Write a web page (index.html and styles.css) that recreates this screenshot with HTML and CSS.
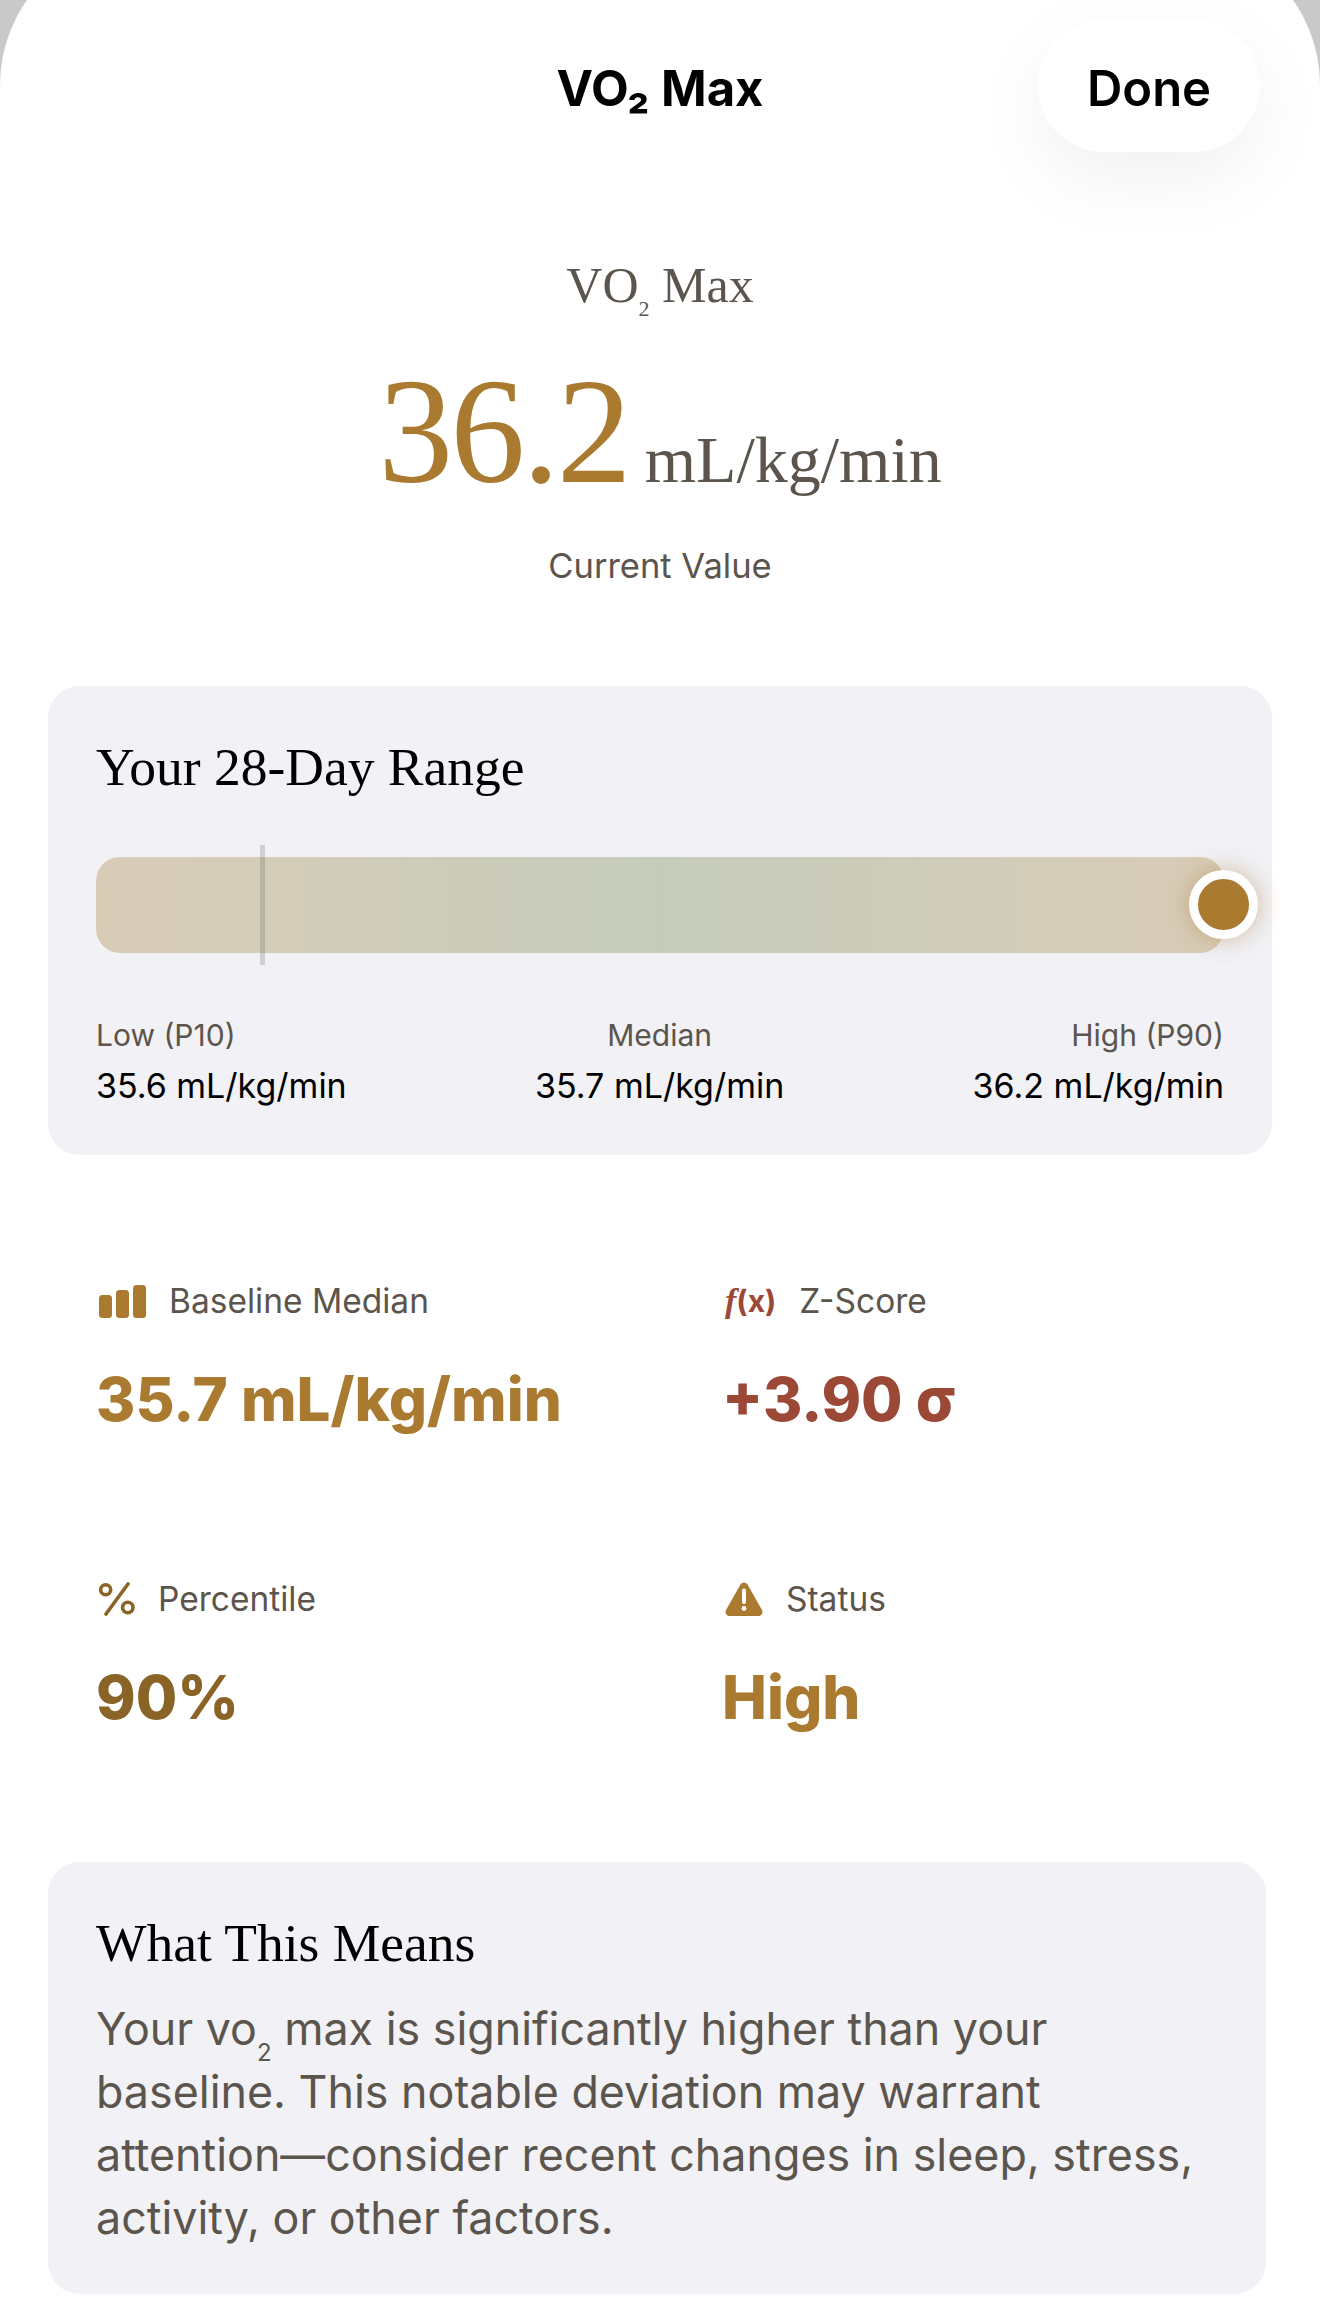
FILE: index.html
```html
<!DOCTYPE html>
<html lang="en">
<head>
    <meta charset="UTF-8">
    <meta name="viewport" content="width=device-width, initial-scale=1.0">
    <title>VO2 Max</title>
    <link rel="stylesheet" href="styles.css">
</head>
<body>
    <div class="sheet">
        <div class="nav-bar">
            <h1 class="nav-title">VO₂ Max</h1>
            <button class="done-btn">Done</button>
        </div>

        <div class="current">
            <div class="current-name">VO<sub>2</sub> Max</div>
            <div class="current-reading">
                <span class="current-value">36.2</span>
                <span class="current-unit">mL/kg/min</span>
            </div>
            <div class="current-label">Current Value</div>
        </div>

        <div class="card range-card">
            <h2 class="card-title">Your 28-Day Range</h2>
            <div class="range-track">
                <div class="range-tick"></div>
                <div class="range-dot"></div>
            </div>
            <div class="range-legend">
                <div class="legend-item">
                    <div class="legend-label">Low (P10)</div>
                    <div class="legend-value">35.6 mL/kg/min</div>
                </div>
                <div class="legend-item legend-center">
                    <div class="legend-label">Median</div>
                    <div class="legend-value">35.7 mL/kg/min</div>
                </div>
                <div class="legend-item legend-right">
                    <div class="legend-label">High (P90)</div>
                    <div class="legend-value">36.2 mL/kg/min</div>
                </div>
            </div>
        </div>

        <div class="stats">
            <div class="stat">
                <div class="stat-label">
                    <svg class="icon" width="47" height="33" viewBox="0 0 47 33">
                        <rect x="0" y="10" width="13" height="23" rx="3.5" fill="#a97a30"/>
                        <rect x="17" y="5" width="13" height="28" rx="3.5" fill="#a97a30"/>
                        <rect x="34" y="0" width="13" height="33" rx="3.5" fill="#a97a30"/>
                    </svg>
                    <span>Baseline Median</span>
                </div>
                <div class="stat-value gold">35.7 mL/kg/min</div>
            </div>
            <div class="stat">
                <div class="stat-label">
                    <span class="icon icon-fx"><i>f</i>(x)</span>
                    <span>Z-Score</span>
                </div>
                <div class="stat-value red">+3.90 σ</div>
            </div>
            <div class="stat">
                <div class="stat-label">
                    <svg class="icon" width="36" height="34" viewBox="0 0 36 34">
                        <g fill="none" stroke="#8a6327" stroke-width="3.600" stroke-linecap="round">
                            <circle cx="6.700" cy="7.700" r="5"/>
                            <circle cx="28.800" cy="25.500" r="5.200"/>
                            <path d="M29 2 L7 32"/>
                        </g>
                    </svg>
                    <span>Percentile</span>
                </div>
                <div class="stat-value brown">90%</div>
            </div>
            <div class="stat">
                <div class="stat-label">
                    <svg class="icon" width="38" height="34" viewBox="0 0 38 34">
                        <path d="M15.500 2.500 C17 -0.300 21 -0.300 22.500 2.500 L37 28 C38.500 31 36.500 34 33.500 34 L4.500 34 C1.500 34 -0.500 31 1 28 Z" fill="#a97a30"/>
                        <path d="M19 8.500 L19 20" stroke="#fff" stroke-width="4" stroke-linecap="round"/>
                        <circle cx="19" cy="26.500" r="2.400" fill="#fff"/>
                    </svg>
                    <span>Status</span>
                </div>
                <div class="stat-value gold">High</div>
            </div>
        </div>

        <div class="card means-card">
            <h2 class="card-title">What This Means</h2>
            <p class="means-text">Your vo<sub>2</sub> max is significantly higher than your baseline. This notable deviation may warrant attention—consider recent changes in sleep, stress, activity, or other factors.</p>
        </div>
    </div>
</body>
</html>
```

FILE: styles.css
```css
:root {
    --gold: #a97a30;
    --brown: #8a6327;
    --red: #9c4836;
    --text-muted: #5c554d;
    --surface: #f1f1f6;
}
html, body {
    margin: 0;
    padding: 0;
}
body {
    width: 1320px;
    height: 2313px;
    overflow: hidden;
    background: #c9c9c9;
    font-family: Inter, "Noto Sans", sans-serif;
    color: #000;
}
h1, h2, p {
    margin: 0;
    font-weight: normal;
}
/* The sheet's top edge runs above the screen, so only part of its corner shows */
.sheet {
    height: 2375px;
    box-sizing: border-box;
    margin-top: -62px;
    padding: 82px 48px 0;
    background: #fff;
    border-radius: 147px 147px 0 0;
    overflow: hidden;
}

/* Top bar */
.nav-bar {
    position: relative;
    display: flex;
    justify-content: flex-end;
    align-items: center;
    height: 132px;
    padding-right: 12px;
}
.nav-title {
    position: absolute;
    left: 0;
    right: 0;
    padding-top: 4px;
    text-align: center;
    font-size: 49px;
    font-weight: 700;
}
.done-btn {
    width: 222px;
    height: 132px;
    padding: 5px 0 0;
    border: none;
    border-radius: 66px;
    background: #fff;
    color: #000;
    font-family: inherit;
    font-size: 49px;
    font-weight: 600;
    box-shadow: 0 26px 80px rgba(0, 0, 0, 0.06);
}

/* Current value */
.current {
    display: flex;
    flex-direction: column;
    align-items: center;
    margin-top: 103px;
    color: var(--text-muted);
}
.current-name {
    font-family: "Liberation Serif", serif;
    font-size: 50px;
    line-height: 60px;
}
.current-name sub {
    font-size: 22px;
    line-height: 0;
    vertical-align: -14px;
}
.current-reading {
    display: flex;
    align-items: baseline;
    gap: 16px;
    margin-top: 41px;
    font-family: "Liberation Serif", serif;
}
.current-value {
    font-size: 150px;
    line-height: 150px;
    letter-spacing: -3px;
    color: var(--gold);
}
.current-unit {
    font-size: 66px;
}
.current-label {
    margin-top: 38px;
    font-size: 34.5px;
    line-height: 44px;
}

/* Cards */
.card {
    background: var(--surface);
    border-radius: 32px;
    box-sizing: border-box;
}
.card-title {
    font-family: "Liberation Serif", serif;
    font-size: 53.5px;
    line-height: 60px;
}
.range-card {
    width: 1224px;
    height: 469px;
    margin-top: 98px;
    padding: 51px 48px 0;
}
.range-track {
    position: relative;
    height: 96px;
    width: 1128px;
    margin-top: 60px;
    border-radius: 24px;
    background: linear-gradient(90deg, #d9ccb7 0%, #c6ccbc 50%, #d9ccb7 100%);
}
.range-tick {
    position: absolute;
    left: 164px;
    top: -12px;
    width: 5px;
    height: 120px;
    background: rgba(92, 85, 77, 0.22);
}
.range-dot {
    position: absolute;
    right: -34px;
    top: 13px;
    width: 51px;
    height: 51px;
    border: 9px solid #fff;
    border-radius: 50%;
    background: var(--gold);
    box-shadow: 0 0 24px rgba(169, 122, 48, 0.45);
}
.range-legend {
    display: flex;
    justify-content: space-between;
    width: 1128px;
    margin-top: 62px;
}
.legend-label {
    font-size: 30px;
    line-height: 40px;
    color: var(--text-muted);
}
.legend-value {
    margin-top: 10px;
    font-size: 34px;
    line-height: 42px;
}
.legend-center {
    text-align: center;
}
.legend-right {
    text-align: right;
}

/* Stats grid */
.stats {
    display: grid;
    grid-template-columns: 626px 1fr;
    row-gap: 143px;
    margin-top: 124px;
    padding-left: 48px;
}
.stat-label {
    display: flex;
    align-items: center;
    gap: 23px;
    height: 44px;
    font-size: 33.5px;
    color: var(--text-muted);
}
.icon {
    flex: none;
    margin-left: 3px;
}
.icon-fx {
    font-size: 30px;
    font-weight: 700;
    color: var(--red);
    white-space: nowrap;
}
.icon-fx i {
    font-family: "Liberation Serif", serif;
    font-size: 34px;
}
.stat-value {
    margin-top: 41px;
    font-size: 60px;
    line-height: 70px;
    font-weight: 800;
}
.gold { color: var(--gold); }
.brown { color: var(--brown); }
.red { color: var(--red); }

/* What this means */
.means-card {
    width: 1218px;
    height: 432px;
    margin-top: 130px;
    padding: 51px 48px 0;
}
.means-text {
    margin-top: 25px;
    font-size: 44.8px;
    line-height: 63px;
    color: var(--text-muted);
}
.means-text sub {
    font-size: 24px;
    line-height: 0;
    vertical-align: -16px;
}
```
